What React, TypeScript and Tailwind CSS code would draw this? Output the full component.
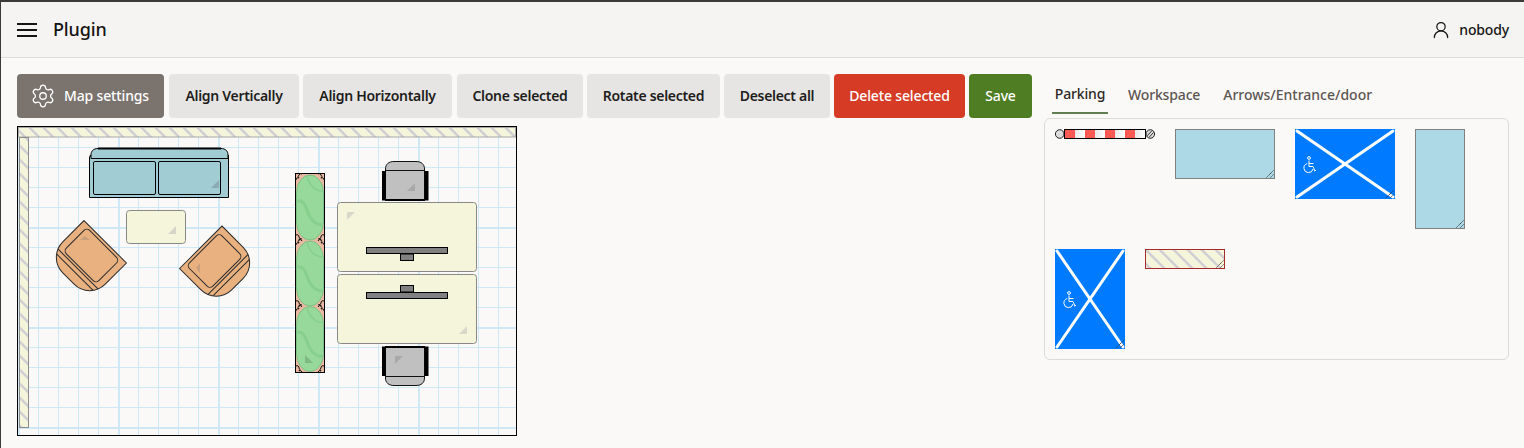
import { Settings, UserRound } from 'lucide-react';

const fontClass = "font-['Noto_Sans',sans-serif]";

const buttons = [
    { label: 'Align Vertically', width: 'ml-px w-[130px]', color: 'bg-[#e6e5e3] font-semibold tracking-[-0.3px] text-[#1f1d1b]' },
    { label: 'Align Horizontally', width: 'w-[149px]', color: 'bg-[#e6e5e3] font-semibold tracking-[-0.3px] text-[#1f1d1b]' },
    { label: 'Clone selected', width: 'ml-px w-[126px]', color: 'bg-[#e6e5e3] font-semibold tracking-[-0.3px] text-[#1f1d1b]' },
    { label: 'Rotate selected', width: 'w-[133px]', color: 'bg-[#e6e5e3] font-semibold tracking-[-0.3px] text-[#1f1d1b]' },
    { label: 'Deselect all', width: 'w-[106px]', color: 'bg-[#e6e5e3] font-semibold tracking-[-0.3px] text-[#1f1d1b]' },
    { label: 'Delete selected', width: 'w-[131px]', color: 'bg-[#d63b25] font-medium text-white' },
    { label: 'Save', width: 'w-[63px]', color: 'bg-[#4f7d23] font-medium text-white' },
];

function Hatch({ id }: { id: string }) {
    return (
        <pattern id={id} width="14" height="14" patternUnits="userSpaceOnUse">
            <rect width="14" height="14" fill="#f5f5dc" />
            <path d="M-2 -2L16 16M-2 12L2 16M12 -2L16 2" stroke="#cfcfd4" strokeWidth="2.4" />
        </pattern>
    );
}

function Grip({ w, h }: { w: number; h: number }) {
    return (
        <path
            d={`M${w - 1.5} ${h - 8.5}L${w - 8.5} ${h - 1.5}M${w - 1.5} ${h - 4.5}L${w - 4.5} ${h - 1.5}`}
            stroke="#333"
            strokeWidth="1"
            strokeDasharray="1.2 0.6"
            fill="none"
        />
    );
}

function Wheelchair({ x, y }: { x: number; y: number }) {
    return (
        <g transform={`translate(${x} ${y})`} fill="none" stroke="#fff" strokeWidth="1">
            <circle cx="7" cy="2" r="1.4" />
            <path d="M7 4.5V10.5H11L13 15" />
            <path d="M7 7.5H11.5" />
            <path d="M5.2 7.6A4.6 4.6 0 1 0 11 13" />
            <path d="M12.2 15L14 14.3" />
        </g>
    );
}

function ParkingX({ w, h }: { w: number; h: number }) {
    return (
        <svg width={w} height={h} viewBox={`0 0 ${w} ${h}`} className="block shrink-0">
            <rect width={w} height={h} fill="#007bff" />
            <path d={`M2 2L${w - 2} ${h - 2}M${w - 2} 2L2 ${h - 2}`} stroke="#fff" strokeWidth="3" strokeLinecap="round" />
            <Wheelchair x={7} y={h / 2 - 8} />
            <Grip w={w} h={h} />
        </svg>
    );
}

function BlueSlot({ w, h }: { w: number; h: number }) {
    return (
        <svg width={w} height={h} viewBox={`0 0 ${w} ${h}`} className="block shrink-0">
            <rect x="0.5" y="0.5" width={w - 1} height={h - 1} fill="#add8e6" stroke="#808080" />
            <Grip w={w} h={h} />
        </svg>
    );
}

function Barrier() {
    return (
        <svg width="100" height="10" viewBox="0 0 100 10" className="block shrink-0">
            <defs>
                <linearGradient id="barWhite" x1="0" x2="1" y1="0" y2="0">
                    <stop offset="0" stopColor="#e8e8e8" />
                    <stop offset="1" stopColor="#ffffff" />
                </linearGradient>
            </defs>
            <circle cx="4.7" cy="5" r="4.3" fill="#dcdcdc" stroke="#222" />
            <rect x="9.5" y="0.5" width="81" height="9" fill="#fff" stroke="#000" />
            {[20, 40, 60, 80].map((x) => (
                <rect key={x} x={x} y="1" width="10" height="8" fill="url(#barWhite)" />
            ))}
            {[10, 30, 50, 70].map((x) => (
                <rect key={x} x={x} y="1" width="10" height="8" fill="#ff5a52" />
            ))}
            <circle cx="95.3" cy="5" r="4.3" fill="#dcdcdc" stroke="#222" />
            <path d="M92.2 6.8L96.8 1.8M94 8.4L98.6 3.4" stroke="#333" strokeWidth="1" />
        </svg>
    );
}

function HatchSlot() {
    return (
        <svg width="80" height="20" viewBox="0 0 80 20" className="block shrink-0">
            <defs>
                <Hatch id="paletteHatch" />
            </defs>
            <rect x="0.5" y="0.5" width="79" height="19" fill="url(#paletteHatch)" stroke="#a52a2a" />
            <Grip w={80} h={20} />
        </svg>
    );
}

function Armchair({ cx, cy, angle }: { cx: number; cy: number; angle: number }) {
    return (
        <g transform={`translate(${cx} ${cy}) rotate(${angle})`} stroke="#2b2b2b" strokeWidth="1" fill="#e9b180">
            <path d="M-30 -30H30V0A22 22 0 0 1 8 22H-8A22 22 0 0 1 -30 0Z" />
            <rect x="-23" y="-27" width="46" height="33" rx="4" />
            <path d="M-28.500 8.500H28.500" fill="none" />
            <path d="M-25.500 13H25.500" fill="none" />
        </g>
    );
}

function DeskChair({ flip }: { flip?: boolean }) {
    return (
        <g transform={flip ? 'translate(0 547) scale(1 -1)' : undefined}>
            <path d="M385.500 171V169C385.500 164 389 161.500 394 161.500H416C421 161.500 424.500 164 424.500 169V171Z" fill="#c0c0c0" stroke="#111" />
            <rect x="385.500" y="170.500" width="39" height="29" fill="#c0c0c0" stroke="#111" />
            <rect x="382" y="171" width="4" height="29.500" fill="#000" />
            <rect x="424.500" y="171" width="4" height="29.500" fill="#000" />
            <rect x="385" y="199" width="40" height="2" fill="#000" />
        </g>
    );
}

function Pill({ y }: { y: number }) {
    return (
        <g>
            <rect x="296.500" y={y} width="27" height="65" rx="13.500" ry="18" fill="#97d99a" stroke="#7fbf85" />
            <path d={`M307 ${y + 1}C309 ${y + 10} 315 ${y + 16} 323 ${y + 16}`} fill="none" stroke="#87cf8c" strokeWidth="1.500" />
            <path
                d={`M297 ${y + 26}C305 ${y + 24} 306 ${y + 34} 309 ${y + 40}C312 ${y + 47} 318 ${y + 50} 323 ${y + 50}`}
                fill="none"
                stroke="#87cf8c"
                strokeWidth="3"
            />
        </g>
    );
}

// small black scallops in the corners left between the round planter shapes
function Scallops({ y, up }: { y: number; up?: boolean }) {
    const s = up ? -1 : 1;
    return (
        <path
            d={`M296 ${y + s * 5}a2 2 0 0 1 3 ${s * -2}a2 2 0 0 1 0 ${s * -3}M324 ${y + s * 5}a2 2 0 0 0 -3 ${s * -2}a2 2 0 0 0 0 ${s * -3}M299 ${y}a2 2 0 0 1 3 ${s * -1}M321 ${y}a2 2 0 0 0 -3 ${s * -1}`}
            fill="none"
            stroke="#111"
        />
    );
}

function FloorPlan() {
    return (
        <svg width="500" height="310" viewBox="17 126 500 310" className="block">
            <defs>
                <pattern id="gridSmall" x="18" y="127" width="20" height="20" patternUnits="userSpaceOnUse">
                    <rect width="1" height="20" fill="#cfe8f5" />
                    <rect width="20" height="1" fill="#cfe8f5" />
                </pattern>
                <pattern id="gridLarge" x="18" y="127" width="100" height="100" patternUnits="userSpaceOnUse">
                    <rect width="2" height="100" fill="#cfe8f5" />
                    <rect width="100" height="2" fill="#cfe8f5" />
                </pattern>
                <Hatch id="wallHatch" />
            </defs>
            <rect x="17" y="126" width="500" height="310" fill="#fbf9f8" />
            <rect x="17" y="126" width="500" height="310" fill="url(#gridSmall)" />
            <rect x="17" y="126" width="500" height="310" fill="url(#gridLarge)" />

            <rect x="18.500" y="127.500" width="497" height="9.500" fill="url(#wallHatch)" stroke="#a8a8a8" />
            <rect x="19.500" y="137.500" width="9" height="290" fill="url(#wallHatch)" stroke="#8c8c8c" />

            {/* sofa */}
            <path d="M89.500 197.500V158C89.500 156 90.500 155 91 155V157H228V155C228.500 155 228.500 156 228.500 158V197.500Z" fill="#a2ccd3" stroke="#000" />
            <path d="M91 158.500V155C91 151 93.500 148.500 98 148.500H221C225.500 148.500 228 151 228 155V158.500Z" fill="#a2ccd3" stroke="#000" />
            <path d="M98 148.500H221" stroke="#000" strokeWidth="2" />
            <rect x="93.500" y="161.500" width="62" height="33" rx="1.500" fill="#a2ccd3" stroke="#000" />
            <rect x="158.500" y="161.500" width="62" height="33" rx="1.500" fill="#a2ccd3" stroke="#000" />
            <path d="M219 180V188H211Z" fill="#8aa9b0" />

            {/* coffee table */}
            <rect x="126.500" y="210.500" width="59" height="33" rx="3" fill="#f5f5dc" stroke="#888" />
            <path d="M176 226V234H168Z" fill="#d5d5c8" />

            <Armchair cx={84} cy={263} angle={45} />
            <Armchair cx={222} cy={268.500} angle={-45} />
            <path d="M85 236L90 240H80Z" fill="#c99f7c" />
            <path d="M200 263V273L196 268Z" fill="#c99f7c" />

            {/* planter */}
            <rect x="295.500" y="173.500" width="29" height="199" fill="#e8b9a0" stroke="#000" />
            <Scallops y={175} />
            <Scallops y={240} up />
            <Scallops y={240} />
            <Scallops y={306} up />
            <Scallops y={306} />
            <Scallops y={371} up />
            <Pill y={175} />
            <Pill y={241} />
            <Pill y={306.500} />
            <path d="M305 355L313 363H305Z" fill="#80b884" />

            {/* desks */}
            <DeskChair />
            <DeskChair flip />
            <rect x="337.500" y="202.500" width="139" height="69" rx="3" fill="#f5f5dc" stroke="#888" />
            <path d="M347 212H355L347 220Z" fill="#d8d8c8" />
            <rect x="366.500" y="247.500" width="81" height="6" fill="#808080" stroke="#000" />
            <rect x="400.500" y="254" width="13" height="6.500" fill="#808080" stroke="#000" />
            <rect x="337.500" y="274.500" width="139" height="69" rx="3" fill="#f5f5dc" stroke="#888" />
            <rect x="400.500" y="285.500" width="13" height="6.500" fill="#808080" stroke="#000" />
            <rect x="366.500" y="292.500" width="81" height="6" fill="#808080" stroke="#000" />
            <path d="M467 326V334H459Z" fill="#d8d8c8" />
            <path d="M415 183V191H407Z" fill="#a8a8a8" />
            <path d="M395 356H403L395 364Z" fill="#a8a8a8" />

            <rect x="17.500" y="126.500" width="499" height="309" fill="none" stroke="#000" />
        </svg>
    );
}

export default function App() {
    return (
        <div className={`h-[448px] w-[1524px] overflow-hidden border-t-2 border-l border-[#3a3a3a] bg-[#fbf9f8] tracking-[-0.15px] ${fontClass}`}>
            <header className="flex h-[56px] items-center justify-between border-b border-[#dddbd8] bg-[#f5f4f2] pr-[15px] pl-[16px]">
                <div className="flex items-center gap-[16px]">
                    <svg width="20" height="14" viewBox="0 0 20 14" className="block">
                        <path d="M0 1H20M0 7H20M0 13H20" stroke="#161513" strokeWidth="2" />
                    </svg>
                    <span className="text-[18px] font-medium text-[#161513]">Plugin</span>
                </div>
                <div className="flex items-center gap-[8px]">
                    <UserRound size={20} strokeWidth={1.5} className="text-[#161513]" />
                    <span className="text-[14px] font-medium text-[#161513]">nobody</span>
                </div>
            </header>
            <main className="flex gap-[12px] pt-[16px] pl-[16px]">
                <div className="flex w-[1015px] flex-col gap-[8px]">
                    <div className="flex gap-[4px]">
                        <button className="flex h-[44px] w-[147px] items-center gap-[8px] rounded-[4px] bg-[#7a736e] pb-[1px] pl-[13px] text-[14px] font-medium text-white">
                            <Settings size={26} strokeWidth={1.2} />
                            Map settings
                        </button>
                        {buttons.map((b) => (
                            <button key={b.label} className={`h-[44px] ${b.width} rounded-[4px] pb-[1px] text-[14px] ${b.color}`}>
                                {b.label}
                            </button>
                        ))}
                    </div>
                    <FloorPlan />
                </div>
                <div className="w-[465px]">
                    <div className="flex h-[40px] gap-[16px] pl-[8px] text-[14px] font-medium text-[#5b5652]">
                        <div className="flex w-[56px] items-center justify-center border-b-2 border-[#5f7d4f] text-[#2b2825]">Parking</div>
                        <div className="flex items-center px-[4px]">Workspace</div>
                        <div className="-ml-px flex items-center px-[4px] tracking-normal">Arrows/Entrance/door</div>
                    </div>
                    <div className="mt-[4px] flex h-[242px] flex-wrap content-start items-start gap-[20px] rounded-[6px] border border-[#dddbd8] p-[10px]">
                        <Barrier />
                        <BlueSlot w={100} h={50} />
                        <ParkingX w={100} h={70} />
                        <BlueSlot w={50} h={100} />
                        <ParkingX w={70} h={100} />
                        <HatchSlot />
                    </div>
                </div>
            </main>
        </div>
    );
}
